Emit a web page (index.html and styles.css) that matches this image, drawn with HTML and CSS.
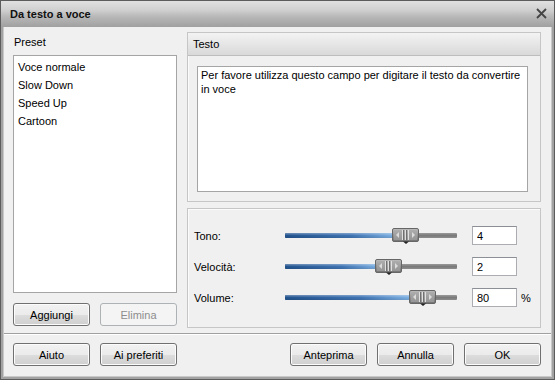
FILE: index.html
```html
<!DOCTYPE html>
<html lang="it">
<head>
<meta charset="utf-8">
<title>Da testo a voce</title>
<link rel="stylesheet" href="styles.css">
</head>
<body>
<div class="window">
  <div class="titlebar">
    <span class="title">Da testo a voce</span>
    <svg class="close" width="11" height="11" viewBox="0 0 11 11"><path d="M1 1L10 10M10 1L1 10" stroke="#444" stroke-width="1.8" fill="none"/></svg>
  </div>
  <div class="client">
    <div class="main">
      <div class="left">
        <div class="label">Preset</div>
        <ul class="list">
          <li>Voce normale</li>
          <li>Slow Down</li>
          <li>Speed Up</li>
          <li>Cartoon</li>
        </ul>
        <div class="btnrow">
          <button class="btn">Aggiungi</button>
          <button class="btn" disabled>Elimina</button>
        </div>
      </div>
      <div class="right">
        <div class="group text-group">
          <div class="group-header">Testo</div>
          <div class="textbox">Per favore utilizza questo campo per digitare il testo da convertire<br>in voce</div>
        </div>
        <div class="group slider-group">
          <div class="srow">
            <span class="slabel">Tono:</span>
            <div class="track"><div class="fill" style="width:120px"></div>
              <svg class="thumb" style="left:107px" width="27" height="16" viewBox="0 0 27 16"><use href="#thumb"/></svg>
            </div>
            <input class="num" value="4">
          </div>
          <div class="srow">
            <span class="slabel">Velocità:</span>
            <div class="track"><div class="fill" style="width:103px"></div>
              <svg class="thumb" style="left:90px" width="27" height="16" viewBox="0 0 27 16"><use href="#thumb"/></svg>
            </div>
            <input class="num" value="2">
          </div>
          <div class="srow">
            <span class="slabel">Volume:</span>
            <div class="track"><div class="fill" style="width:137px"></div>
              <svg class="thumb" style="left:124px" width="27" height="16" viewBox="0 0 27 16"><use href="#thumb"/></svg>
            </div>
            <input class="num" value="80">
            <span class="pct">%</span>
          </div>
        </div>
      </div>
    </div>
    <div class="sep"></div>
    <div class="footer">
      <button class="btn">Aiuto</button>
      <button class="btn">Ai preferiti</button>
      <span class="spacer"></span>
      <button class="btn">Anteprima</button>
      <button class="btn">Annulla</button>
      <button class="btn">OK</button>
    </div>
  </div>
</div>
<svg class="defs" width="0" height="0">
  <defs>
    <linearGradient id="tg" x1="0" y1="0" x2="0" y2="1">
      <stop offset="0" stop-color="#bdbdbd"/>
      <stop offset="0.5" stop-color="#959595"/>
      <stop offset="1" stop-color="#727272"/>
    </linearGradient>
    <g id="thumb">
      <rect x="0.5" y="0.5" width="26" height="13" rx="1.5" fill="url(#tg)" stroke="#666"/>
      <rect x="2" y="2" width="23" height="10" fill="#a8a8a8" opacity="0.6"/>
      <path d="M7 4L4 7L7 10Z" fill="#dcdcdc"/>
      <path d="M20 4L23 7L20 10Z" fill="#dcdcdc"/>
      <path d="M10.5 2V12M13.5 2V12M16.5 2V12" stroke="#e0e0e0" stroke-width="1"/>
      <path d="M11.5 2V12M14.5 2V12" stroke="#707070" stroke-width="1"/>
      <path d="M11 13.5H17L14 16Z" fill="#222"/>
    </g>
  </defs>
</svg>
</body>
</html>
```
FILE: styles.css
```css
* { box-sizing: border-box; }
html, body { margin: 0; padding: 0; background: #f0f0f0; }
body {
  font-family: "Liberation Sans", Arial, sans-serif;
  font-size: 11px;
  color: #000;
}
.defs { position: absolute; width: 0; height: 0; }
.window {
  width: 555px;
  height: 380px;
  border: 1px solid #5c5c5c;
  background: #a2a2a2;
  display: flex;
  flex-direction: column;
}
.titlebar {
  height: 26px;
  flex: none;
  display: flex;
  align-items: center;
  padding: 0 6px 0 9px;
  background: linear-gradient(#e0e0e0 0%, #d0d0d0 35%, #b8b8b8 60%, #a0a0a0 100%);
}
.title {
  font-weight: bold;
  font-size: 11px;
  color: #111;
  flex: 1;
  margin-top: -1px;
}
.close { margin-top: -1px; margin-right: 1px; }
.client {
  flex: 1;
  margin: 0 2px 2px;
  border: 1px solid #c9c9c9;
  border-top: none;
  background: #f0f0f0;
  display: flex;
  flex-direction: column;
  padding: 5px 0 9px;
}
.main {
  height: 296px;
  display: flex;
  gap: 10px;
  padding: 0 10px 0 9px;
}
.left {
  width: 164px;
  display: flex;
  flex-direction: column;
}
.label {
  height: 23px;
  padding: 4px 0 0 1px;
  line-height: 13px;
}
.list {
  list-style: none;
  margin: 0;
  padding: 2px 0 0 4px;
  height: 238px;
  background: #fff;
  border: 1px solid #a5a5a5;
}
.list li { line-height: 18px; height: 18px; }
.btnrow {
  display: flex;
  gap: 10px;
  margin-top: 10px;
}
.btn {
  width: 77px;
  height: 23px;
  font-family: inherit;
  font-size: 11px;
  color: #000;
  border: 1px solid #707070;
  border-radius: 3px;
  background: linear-gradient(#f2f2f2 0%, #ebebeb 50%, #dddddd 51%, #cfcfcf 100%);
  box-shadow: inset 0 0 0 1px #fcfcfc;
  padding: 0;
  margin: 0;
}
.btn:disabled {
  color: #8d8d8d;
  border-color: #adb2b5;
  background: #f4f4f4;
  box-shadow: none;
}
.right {
  width: 354px;
  display: flex;
  flex-direction: column;
}
.group {
  border: 1px solid #c6c6c6;
  box-shadow: inset 1px 1px 0 #fbfbfb;
}
.text-group {
  height: 170px;
  display: flex;
  flex-direction: column;
}
.group-header {
  height: 23px;
  padding: 5px 0 0 5px;
  line-height: 13px;
  background: linear-gradient(#f3f3f3, #d9d9d9);
  border-bottom: 1px solid #bdbdbd;
}
.textbox {
  margin: 10px 12px 0 9px;
  height: 126px;
  background: #fff;
  border: 1px solid #a5a5a5;
  padding: 1px 3px;
  line-height: 14px;
}
.slider-group {
  margin-top: 6px;
  height: 120px;
  padding: 17px 0 0 6px;
  display: flex;
  flex-direction: column;
  gap: 12px;
}
.srow {
  height: 19px;
  display: flex;
  align-items: center;
}
.slabel { width: 91px; }
.track {
  position: relative;
  width: 172px;
  height: 5px;
  background: linear-gradient(#9a9a9a, #7a7a7a 50%, #8c8c8c);
  border-radius: 1px;
}
.fill {
  height: 5px;
  border-radius: 1px;
  background:
    linear-gradient(rgba(255,255,255,0.35), rgba(255,255,255,0) 50%, rgba(0,0,0,0.1)),
    linear-gradient(90deg, #23548f 0%, #3f74b3 55%, #8ec0ef 100%);
}
.thumb {
  position: absolute;
  top: -5px;
}
.num {
  margin-left: 15px;
  width: 45px;
  height: 19px;
  border: 1px solid #abadb3;
  border-top-color: #8c8f96;
  padding: 0 4px;
  font-family: inherit;
  font-size: 11px;
  color: #000;
  background: #fff;
  outline: none;
}
.pct { margin-left: 4px; }
.sep {
  margin-top: 5px;
  height: 2px;
  border-top: 1px solid #a0a0a0;
  border-bottom: 1px solid #ffffff;
}
.footer {
  margin-top: 8px;
  display: flex;
  gap: 10px;
  padding: 0 10px 0 9px;
}
.spacer { flex: 1; }
```
